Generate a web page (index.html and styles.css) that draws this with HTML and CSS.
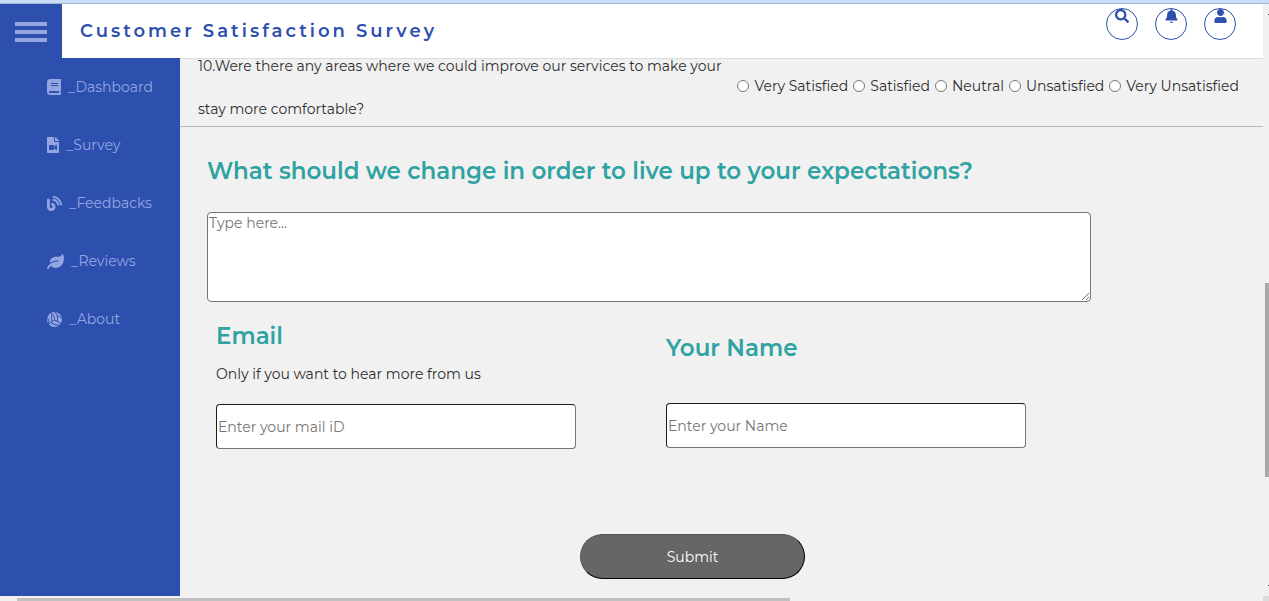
FILE: index.html
```html
<!DOCTYPE html>
<html lang="en">
<head>
<meta charset="utf-8">
<title>Customer Satisfaction Survey</title>
<link rel="stylesheet" href="styles.css">
</head>
<body>
<div class="strip"></div>
<div class="app">
  <header class="topbar">
    <button class="menu" type="button" aria-label="Menu"><span class="bar"></span><span class="bar"></span><span class="bar"></span></button>
    <h1 class="title">Customer Satisfaction Survey</h1>
    <div class="actions">
      <button class="round" type="button" aria-label="Search"><svg viewBox="0 0 512 512" width="14" height="14"><path d="M505 442.7L405.3 343c-4.5-4.5-10.6-7-17-7H372c27.6-35.3 44-79.7 44-128C416 93.1 322.9 0 208 0S0 93.1 0 208s93.1 208 208 208c48.3 0 92.7-16.4 128-44v16.3c0 6.4 2.5 12.5 7 17l99.7 99.7c9.4 9.4 24.6 9.4 33.9 0l28.3-28.3c9.4-9.4 9.4-24.6.1-34zM208 336c-70.7 0-128-57.2-128-128 0-70.7 57.2-128 128-128 70.7 0 128 57.2 128 128 0 70.7-57.2 128-128 128z"/></svg></button>
      <button class="round" type="button" aria-label="Notifications"><svg viewBox="0 0 448 512" width="13" height="14"><path d="M224 512c30 0 52-20 52-48H172c0 28 22 48 52 48zm215.390-133.710c-19.320-20.760-55.470-67.990-55.470-170.290 0-77.700-54.480-139.900-127.940-155.160V32c0-17.670-14.320-32-31.980-32s-31.980 14.330-31.980 32v20.840C118.560 68.100 64.080 130.300 64.080 208c0 102.300-36.150 149.530-55.470 170.290-6 6.450-8.610 8-8.610 14 0 16 12.980 24 32.100 24h383.800c19.120 0 32.100-8 32.100-24 0-6-2.610-7.550-8.610-14z"/></svg></button>
      <button class="round" type="button" aria-label="Account"><svg viewBox="0 0 448 512" width="13" height="14"><path d="M224 256c70.700 0 128-57.300 128-128S294.700 0 224 0 96 57.300 96 128s57.300 128 128 128zm89.600 32h-16.700c-22.200 10.200-46.900 16-72.900 16s-50.600-5.800-72.900-16h-16.700C60.200 288 0 348.200 0 422.400V464c0 26.500 21.500 48 48 48h352c26.500 0 48-21.500 48-48v-41.600c0-74.200-60.200-134.400-134.400-134.400z"/></svg></button>
    </div>
  </header>
  <nav class="sidebar">
    <a class="link" href="#"><svg viewBox="0 0 448 512" width="14" height="16"><path d="M448 360V24c0-13.300-10.700-24-24-24H96C43 0 0 43 0 96v320c0 53 43 96 96 96h328c13.300 0 24-10.700 24-24v-16c0-7.500-3.500-14.300-8.900-18.700-4.200-15.400-4.200-59.300 0-74.700 5.400-4.300 8.900-11.100 8.900-18.600zM128 134c0-3.300 2.700-6 6-6h212c3.300 0 6 2.700 6 6v20c0 3.300-2.700 6-6 6H134c-3.300 0-6-2.700-6-6v-20zm0 64c0-3.300 2.700-6 6-6h212c3.300 0 6 2.700 6 6v20c0 3.300-2.700 6-6 6H134c-3.300 0-6-2.700-6-6v-20zm253.400 250H96c-17.700 0-32-14.300-32-32 0-17.600 14.400-32 32-32h285.400c-1.900 17.100-1.900 46.900 0 64z"/></svg><span>_Dashboard</span></a>
    <a class="link" href="#"><svg viewBox="0 0 384 512" width="12" height="16"><path d="M384 121.900v6.100H256V0h6.100c6.400 0 12.500 2.500 17 7l97.900 98c4.500 4.500 7 10.600 7 16.900zM224 136V0H24C10.700 0 0 10.700 0 24v464c0 13.300 10.700 24 24 24h336c13.300 0 24-10.700 24-24V160H248c-13.200 0-24-10.800-24-24zm96 144v112c0 21.400-25.900 32-41 17L224 353.900V392c0 13.300-10.700 24-24 24H88c-13.300 0-24-10.700-24-24V280c0-13.300 10.700-24 24-24h112c13.300 0 24 10.700 24 24v38.100l55-55c15-15 41-4.500 41 16.900z"/></svg><span>_Survey</span></a>
    <a class="link" href="#"><svg viewBox="0 0 512 512" width="15" height="15"><path d="M172.200 226.800c-14.600-2.900-28.200 8.900-28.200 23.800V301c0 10.200 7.100 18.400 16.700 22 18.200 6.800 31.300 24.400 31.300 45 0 26.500-21.500 48-48 48s-48-21.500-48-48V120c0-13.300-10.700-24-24-24H24c-13.300 0-24 10.700-24 24v248c0 89.500 82.100 160.200 175 140.700 54.400-11.400 98.300-55.400 109.700-109.700 17.400-82.900-37-157.200-112.500-172.200zM209 0c-9.200-.5-17 6.800-17 16v31.600c0 8.500 6.600 15.500 15 15.900 129.400 7 233.400 112 240.900 241.500.5 8.400 7.500 15 15.900 15h32.100c9.200 0 16.500-7.800 16-17C503.400 139.800 372.200 8.600 209 0zm.3 96c-9.300-.7-17.300 6.700-17.300 16.100v32.100c0 8.400 6.500 15.300 14.800 15.900 76.800 6.300 138 68.200 144.900 145.200.8 8.300 7.600 14.700 15.900 14.700h32.200c9.300 0 16.800-8 16.100-17.300-8.400-110.100-96.500-198.200-206.600-206.700z"/></svg><span>_Feedbacks</span></a>
    <a class="link" href="#"><svg viewBox="0 0 576 512" width="17" height="15"><path d="M546.200 9.700c-5.600-12.500-21.600-13-28.300-1.200C486.900 62.400 431.400 96 368 96h-80C182 96 96 182 96 288c0 7 .8 13.700 1.500 20.500C161.300 262.800 253.400 224 384 224c8.800 0 16 7.200 16 16s-7.200 16-16 16C132.600 256 26 410.100 2.400 468c-6.600 16.300 1.200 34.900 17.500 41.600 16.400 6.800 35-1.100 41.800-17.300 1.500-3.600 20.900-47.900 71.900-90.600 32.400 43.900 94 85.800 174.900 77.200C465.500 467.500 576 326.700 576 154.300c0-50.200-10.800-102.200-29.800-144.600z"/></svg><span>_Reviews</span></a>
    <a class="link" href="#"><svg viewBox="0 0 30 30" width="15" height="15"><circle cx="15" cy="15" r="15"/><path class="seam" d="M15 16L28 23M15 16L3 24M15 16C15 9 12 4 7 1M16 0C21 6 22 11 21 19M20 8C24 8 27 10 30 13M10 19C8 13 9 8 10 4M1 11C3 15 4 19 3 24M8 21C13 25 19 27 25 26"/></svg><span>_About</span></a>
  </nav>
  <main class="content">
    <form class="survey">
      <fieldset class="question">
        <div class="prompt" id="q10">10.Were there any areas where we could improve our services to make your stay more comfortable?</div>
        <div class="choices" role="radiogroup" aria-labelledby="q10">
          <label class="choice"><input type="radio" name="q10">Very Satisfied</label>
          <label class="choice"><input type="radio" name="q10">Satisfied</label>
          <label class="choice"><input type="radio" name="q10">Neutral</label>
          <label class="choice"><input type="radio" name="q10">Unsatisfied</label>
          <label class="choice"><input type="radio" name="q10">Very Unsatisfied</label>
        </div>
      </fieldset>
      <div class="opinion">
        <label class="heading" for="change">What should we change in order to live up to your expectations?</label>
        <textarea class="box area" id="change" placeholder="Type here..."></textarea>
      </div>
      <div class="fields">
        <div class="field">
          <label class="heading" for="email">Email</label>
          <p class="hint">Only if you want to hear more from us</p>
          <input class="box line" id="email" type="email" placeholder="Enter your mail iD">
        </div>
        <div class="field field-name">
          <label class="heading" for="name">Your Name</label>
          <input class="box line" id="name" type="text" placeholder="Enter your Name">
        </div>
      </div>
      <button class="submit" type="submit">Submit</button>
    </form>
  </main>
</div>
<div class="track-y"><span class="tick"></span><span class="thumb-y"></span><span class="tick"></span></div>
<div class="track-x"><span class="thumb-x"></span></div>
<div class="corner"></div>
</body>
</html>
```
FILE: styles.css
```css
* { box-sizing: border-box; }

body {
  margin: 0;
  height: 100vh;
  display: grid;
  grid-template: 4px minmax(0, 1fr) 5px / minmax(0, 1fr) 6px;
  overflow: hidden;
  background: #f1f1f1;
  color: #2e2e2e;
  font-family: Montserrat, Inter, "Open Sans", sans-serif;
  font-size: 14px;
  font-weight: 400;
}

button, input, textarea { font: inherit; }

.strip {
  grid-column: 1 / -1;
  background: #c9dcf8;
  border-bottom: 1px solid #9fb3d2;
}

.app {
  display: grid;
  grid-template: auto minmax(0, 1fr) / 180px minmax(0, 1fr);
}

.topbar {
  grid-column: 1 / -1;
  z-index: 1;
  display: flex;
  height: 54px;
  background: #fff;
  box-shadow: 0 1px #dcdcdc;
}

.menu {
  display: flex;
  flex-direction: column;
  justify-content: center;
  gap: 4px;
  width: 62px;
  padding: 2px 15px 0;
  border: 0;
  background: #2d4fae;
}

.bar { height: 4px; background: #94a6e2; }

.title {
  margin: 0 auto 0 18px;
  color: #2d4fae;
  font-size: 18px;
  font-weight: 600;
  letter-spacing: 3px;
  line-height: 54px;
}

.actions {
  display: flex;
  gap: 17px;
  padding: 4px 27px 0 0;
}

.round {
  display: flex;
  justify-content: center;
  align-items: flex-start;
  width: 32px;
  height: 32px;
  padding: 0;
  border: 1px solid #2d4fae;
  border-radius: 50%;
  background: none;
  fill: #2d4fae;
}

.sidebar {
  position: relative;
  z-index: 2;
  display: flex;
  flex-direction: column;
  gap: 34px;
  padding: 17px 0 0 47px;
  background: #2d4fae;
}

.link {
  display: flex;
  align-items: center;
  gap: 7px;
  line-height: 24px;
  color: #94a6e2;
  fill: #94a6e2;
  text-decoration: none;
}

.seam { fill: none; stroke: #2d4fae; stroke-width: 2; }

.content { overflow: hidden; }

.survey { display: flex; flex-direction: column; }

.question {
  display: flex;
  align-items: center;
  height: 82px;
  margin: -13px 0 0;
  padding: 0 24px 0 18px;
  border: 0;
  border-bottom: 1px solid #b9b9b9;
}

.prompt { flex: 1; line-height: 43px; }

.choices {
  display: flex;
  gap: 5px;
  padding-bottom: 4px;
  white-space: nowrap;
}

.choice { display: flex; align-items: center; gap: 5px; }

.choice input {
  width: 12px;
  height: 12px;
  margin: 0;
}

.opinion { padding: 29px 27px 0; }

.heading {
  display: block;
  color: #2fa3a1;
  font-size: 23px;
  font-weight: 600;
  line-height: 30px;
}

.box {
  display: block;
  width: 100%;
  border: 1px solid #767676;
  border-radius: 4px;
  background: #fff;
}

.box::placeholder { color: #757575; }

.area {
  max-width: 884px;
  height: 90px;
  margin-top: 26px;
  padding: 1px;
  resize: both;
}

.fields {
  display: grid;
  grid-template-columns: 1fr 1fr;
  gap: 90px;
  max-width: 882px;
  padding: 19px 36px 0;
}

.hint { margin: 13px 0 19px; line-height: 21px; }

.field-name { padding-top: 12px; }

.field-name .heading { margin-bottom: 40px; }

.line {
  height: 45px;
  padding: 0 1px;
  border-top-color: #1c1c1c;
  border-left-color: #1c1c1c;
}

.submit {
  align-self: center;
  width: 225px;
  height: 45px;
  margin: 85px 58px 0 0;
  border: 1px solid;
  border-color: #565656 #000 #000 #565656;
  border-radius: 23px;
  background: #666;
  color: #fff;
}

.track-y {
  display: flex;
  flex-direction: column;
  align-items: flex-end;
  justify-content: space-between;
  padding: 10px 0;
  background: #f0f0f0;
}

.tick { width: 1px; height: 1px; background: #444; }

.thumb-y {
  width: 4px;
  height: 34%;
  margin-top: 160px;
  background: #a9a9a9;
}

.track-x { padding: 2px 0 0 17px; }

.thumb-x {
  display: block;
  width: 62%;
  height: 3px;
  background: #c1c1c1;
}

.corner { background: #dcdcdc; }
```
